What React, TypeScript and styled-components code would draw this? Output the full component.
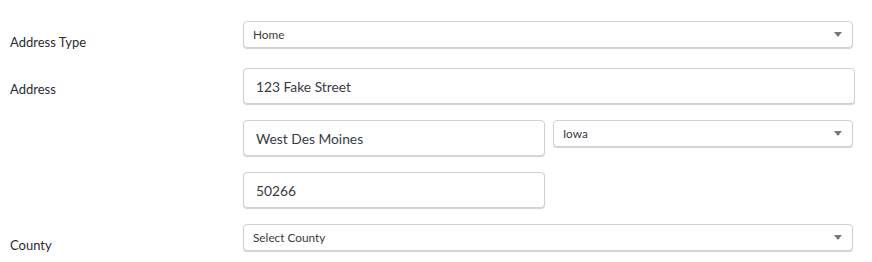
import React from 'react'
import styled, { createGlobalStyle } from 'styled-components'

const GlobalStyle = createGlobalStyle`
  body {
    margin: 0;
    background: #fff;
    font-family: Lato, "Open Sans", sans-serif;
    color: #333;
  }
`

const Form = styled.div`
  width: 872px;
  padding: 21px 0 0 10px;
  box-sizing: border-box;
`

const Row = styled.div<{ gap?: number }>`
  display: flex;
  align-items: flex-start;
  margin-bottom: ${p => (p.gap ?? 16)}px;
`

const Label = styled.div`
  width: 233px;
  flex: none;
  padding-top: 13px;
  margin-bottom: -6px;
  font-size: 13px;
  line-height: 16px;
  color: #2b2b33;
`

const Fields = styled.div`
  display: flex;
  gap: 8px;
`

const Field = styled.div<{ w: number; tall?: boolean }>`
  width: ${p => p.w}px;
  height: ${p => (p.tall ? 36 : 27)}px;
  box-sizing: border-box;
  border: 1px solid #d2d2d2;
  border-radius: 4px;
  box-shadow: 0 1px 1px rgba(0, 0, 0, 0.18);
  background: #fff;
  display: flex;
  align-items: center;
  justify-content: space-between;
  padding: ${p => (p.tall ? '0 12px' : '0 9px')};
  font-size: ${p => (p.tall ? 13.8 : 11.8)}px;
  color: #3a3a44;
`

const Arrow = styled.span`
  width: 0;
  height: 0;
  border-left: 4px solid transparent;
  border-right: 4px solid transparent;
  border-top: 5px solid #777;
  margin-right: 1px;
`

const Select = ({ w, text }: { w: number; text: string }) => (
  <Field w={w}>
    <span>{text}</span>
    <Arrow />
  </Field>
)

export default function App() {
  return (
    <>
      <GlobalStyle />
      <Form>
        <Row gap={20}>
          <Label>Address Type</Label>
          <Select w={610} text="Home" />
        </Row>
        <Row>
          <Label>Address</Label>
          <Field w={612} tall>123 Fake Street</Field>
        </Row>
        <Row>
          <Label />
          <Fields>
            <Field w={302} tall>West Des Moines</Field>
            <Select w={300} text="Iowa" />
          </Fields>
        </Row>
        <Row>
          <Label />
          <Field w={302} tall>50266</Field>
        </Row>
        <Row>
          <Label>County</Label>
          <Select w={610} text="Select County" />
        </Row>
      </Form>
    </>
  )
}
